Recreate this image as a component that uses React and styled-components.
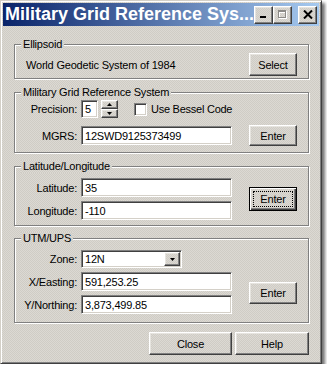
import styled, { createGlobalStyle, css } from "styled-components";

const GlobalStyle = createGlobalStyle`
  body {
    margin: 0;
    background: #ffffff;
    font-family: "Liberation Sans", Arial, sans-serif;
    font-size: 11px;
    color: #000;
  }
`;

const face = css`
  background-color: #d5d2cc;
  background-image: repeating-conic-gradient(#dcd9d3 0 25%, #cfccc5 0 50%);
  background-size: 2px 2px;
`;

const raised = css`
  border: 1px solid;
  border-color: #ffffff #404040 #404040 #ffffff;
  box-shadow: inset -1px -1px 0 #808080, inset 1px 1px 0 #e6e4df;
`;

const sunken = css`
  border: 1px solid;
  border-color: #808080 #ffffff #ffffff #808080;
  box-shadow: inset 1px 1px 0 #404040, inset -1px -1px 0 #d4d0c8;
`;

const Window = styled.div`
  ${face}
  box-sizing: border-box;
  width: 322px;
  height: 364px;
  padding: 2px;
  border: 1px solid;
  border-color: #d4d0c8 #404040 #404040 #d4d0c8;
  box-shadow: inset 1px 1px 0 #fff, inset -1px -1px 0 #808080,
    3px 3px 3px rgba(0, 0, 0, 0.55);
  display: flex;
  flex-direction: column;
`;

const TitleBar = styled.div`
  height: 23px;
  display: flex;
  align-items: center;
  padding: 0 2px;
  background: linear-gradient(to right, #0a246a, #a6caf0);
  color: #fff;
`;

const TitleText = styled.span`
  flex: 1;
  font: bold 18px "Liberation Sans", Arial, sans-serif;
  white-space: nowrap;
  overflow: hidden;
`;

const CaptionButton = styled.span`
  ${face}
  ${raised}
  box-sizing: border-box;
  width: 19px;
  height: 18px;
  display: flex;
  align-items: center;
  justify-content: center;
  margin-left: ${(p) => p.$gap || 0}px;
`;

const Body = styled.div`
  flex: 1;
  padding: 18px 10px 0 11px;
  display: flex;
  flex-direction: column;
`;

const Group = styled.div`
  position: relative;
  margin-top: ${(p) => p.$top || 0}px;
  padding: ${(p) => p.$pad};
  border: 1px solid #808080;
  box-shadow: inset 1px 1px 0 #fff, 1px 1px 0 #fff;
  display: grid;
  grid-template-columns: 61px 151px 1fr 48px;
  row-gap: ${(p) => p.$gap || 0}px;
  align-items: center;
`;

const Caption = styled.span`
  ${face}
  position: absolute;
  top: -7px;
  left: 6px;
  padding: 0 2px;
  line-height: 13px;
  letter-spacing: -0.2px;
`;

const Label = styled.span`
  grid-column: 1;
  text-align: right;
  padding-right: 4px;
  letter-spacing: -0.2px;
  white-space: nowrap;
`;

const Text = styled.span`
  grid-column: 1 / 4;
  padding-left: 6px;
  letter-spacing: -0.2px;
`;

const Field = styled.div`
  ${sunken}
  grid-column: 2;
  box-sizing: border-box;
  width: ${(p) => p.$w || 151}px;
  height: ${(p) => p.$h || 19}px;
  background: #fff;
  padding-left: 3px;
  display: flex;
  align-items: center;
  letter-spacing: -0.2px;
  white-space: nowrap;
`;

const Button = styled.button`
  ${face}
  box-sizing: border-box;
  width: ${(p) => p.$w || 48}px;
  height: ${(p) => p.$h || 23}px;
  padding: 0;
  font: 11px "Liberation Sans", Arial, sans-serif;
  letter-spacing: -0.2px;
  color: #000;
  display: flex;
  align-items: center;
  justify-content: center;
  grid-column: 4;
  grid-row: ${(p) => p.$row || "auto"};
  ${(p) =>
    p.$focused
      ? css`
          border: 1px solid #000;
          box-shadow: inset 1px 1px 0 #fff, inset -1px -1px 0 #404040,
            inset -2px -2px 0 #808080;
        `
      : raised}
`;

const FocusRing = styled.span`
  flex: 1;
  align-self: stretch;
  margin: 3px;
  border: 1px dotted #000;
  display: flex;
  align-items: center;
  justify-content: center;
`;

const PrecisionCell = styled.div`
  grid-column: 2 / 5;
  display: flex;
  align-items: center;
`;

const Spin = styled.div`
  margin-left: 3px;
  width: 17px;
  height: 18px;
  display: flex;
  flex-direction: column;
`;

const SpinHalf = styled.span`
  ${face}
  ${raised}
  box-sizing: border-box;
  flex: 1;
  display: flex;
  align-items: center;
  justify-content: center;
`;

const CheckBox = styled.span`
  ${sunken}
  box-sizing: border-box;
  width: 13px;
  height: 13px;
  background: #fff;
  margin-left: 16px;
`;

const CheckLabel = styled.span`
  margin-left: 4px;
  letter-spacing: -0.25px;
`;

const DropButton = styled.span`
  ${face}
  ${raised}
  box-sizing: border-box;
  width: 16px;
  height: 14px;
  margin-left: auto;
  margin-right: 1px;
  display: flex;
  align-items: center;
  justify-content: center;
`;

const Footer = styled.div`
  margin-top: 9px;
  display: flex;
  justify-content: flex-end;
  gap: 3px;
`;

const Tri = ({ up }) => (
  <svg width="5" height="3" viewBox="0 0 5 3">
    <path d={up ? "M0 3h5L2.5 0z" : "M0 0h5L2.5 3z"} fill="#000" />
  </svg>
);

export default function App() {
  return (
    <>
      <GlobalStyle />
      <Window>
        <TitleBar>
          <TitleText>Military Grid Reference Sys...</TitleText>
          <CaptionButton>
            <svg width="9" height="9" viewBox="0 0 9 9">
              <rect x="1" y="6" width="6" height="2" fill="#000" />
            </svg>
          </CaptionButton>
          <CaptionButton>
            <svg width="11" height="11" viewBox="0 0 11 11">
              <path d="M2 2h8v8H2zM3 4v5h6V4z" fill="#fff" fillRule="evenodd" />
              <path d="M1 1h8v8H1zM2 3v5h6V3z" fill="#8c8a86" fillRule="evenodd" />
            </svg>
          </CaptionButton>
          <CaptionButton $gap={6}>
            <svg width="10" height="9" viewBox="0 0 10 9">
              <path d="M1 0.5l8 8M9 0.5l-8 8" stroke="#000" strokeWidth="2" />
            </svg>
          </CaptionButton>
        </TitleBar>

        <Body>
          <Group $pad="8px 11px 2px 5px">
            <Caption>Ellipsoid</Caption>
            <Text>World Geodetic System of 1984</Text>
            <Button>Select</Button>
          </Group>

          <Group $top={13} $pad="7px 11px 6px 5px" $gap={7}>
            <Caption>Military Grid Reference System</Caption>
            <Label>Precision:</Label>
            <PrecisionCell>
              <Field $w={17} $h={18}>5</Field>
              <Spin>
                <SpinHalf>
                  <Tri up />
                </SpinHalf>
                <SpinHalf>
                  <Tri />
                </SpinHalf>
              </Spin>
              <CheckBox />
              <CheckLabel>Use Bessel Code</CheckLabel>
            </PrecisionCell>
            <Label>MGRS:</Label>
            <Field>12SWD9125373499</Field>
            <Button $h={21} $row={2}>
              Enter
            </Button>
          </Group>

          <Group $top={13} $pad="11px 11px 5px 5px" $gap={4}>
            <Caption>Latitude/Longitude</Caption>
            <Label>Latitude:</Label>
            <Field>35</Field>
            <Button $focused $h={24} $row="1 / 3">
              <FocusRing>Enter</FocusRing>
            </Button>
            <Label>Longitude:</Label>
            <Field>-110</Field>
          </Group>

          <Group $top={12} $pad="11px 11px 8px 5px" $gap={4}>
            <Caption>UTM/UPS</Caption>
            <Label>Zone:</Label>
            <Field $w={101} $h={18}>
              12N
              <DropButton>
                <Tri />
              </DropButton>
            </Field>
            <Label>X/Easting:</Label>
            <Field>591,253.25</Field>
            <Button $h={22} $row="2 / 4">
              Enter
            </Button>
            <Label>Y/Northing:</Label>
            <Field>3,873,499.85</Field>
          </Group>

          <Footer>
            <Button $w={83}>Close</Button>
            <Button $w={74}>Help</Button>
          </Footer>
        </Body>
      </Window>
    </>
  );
}
